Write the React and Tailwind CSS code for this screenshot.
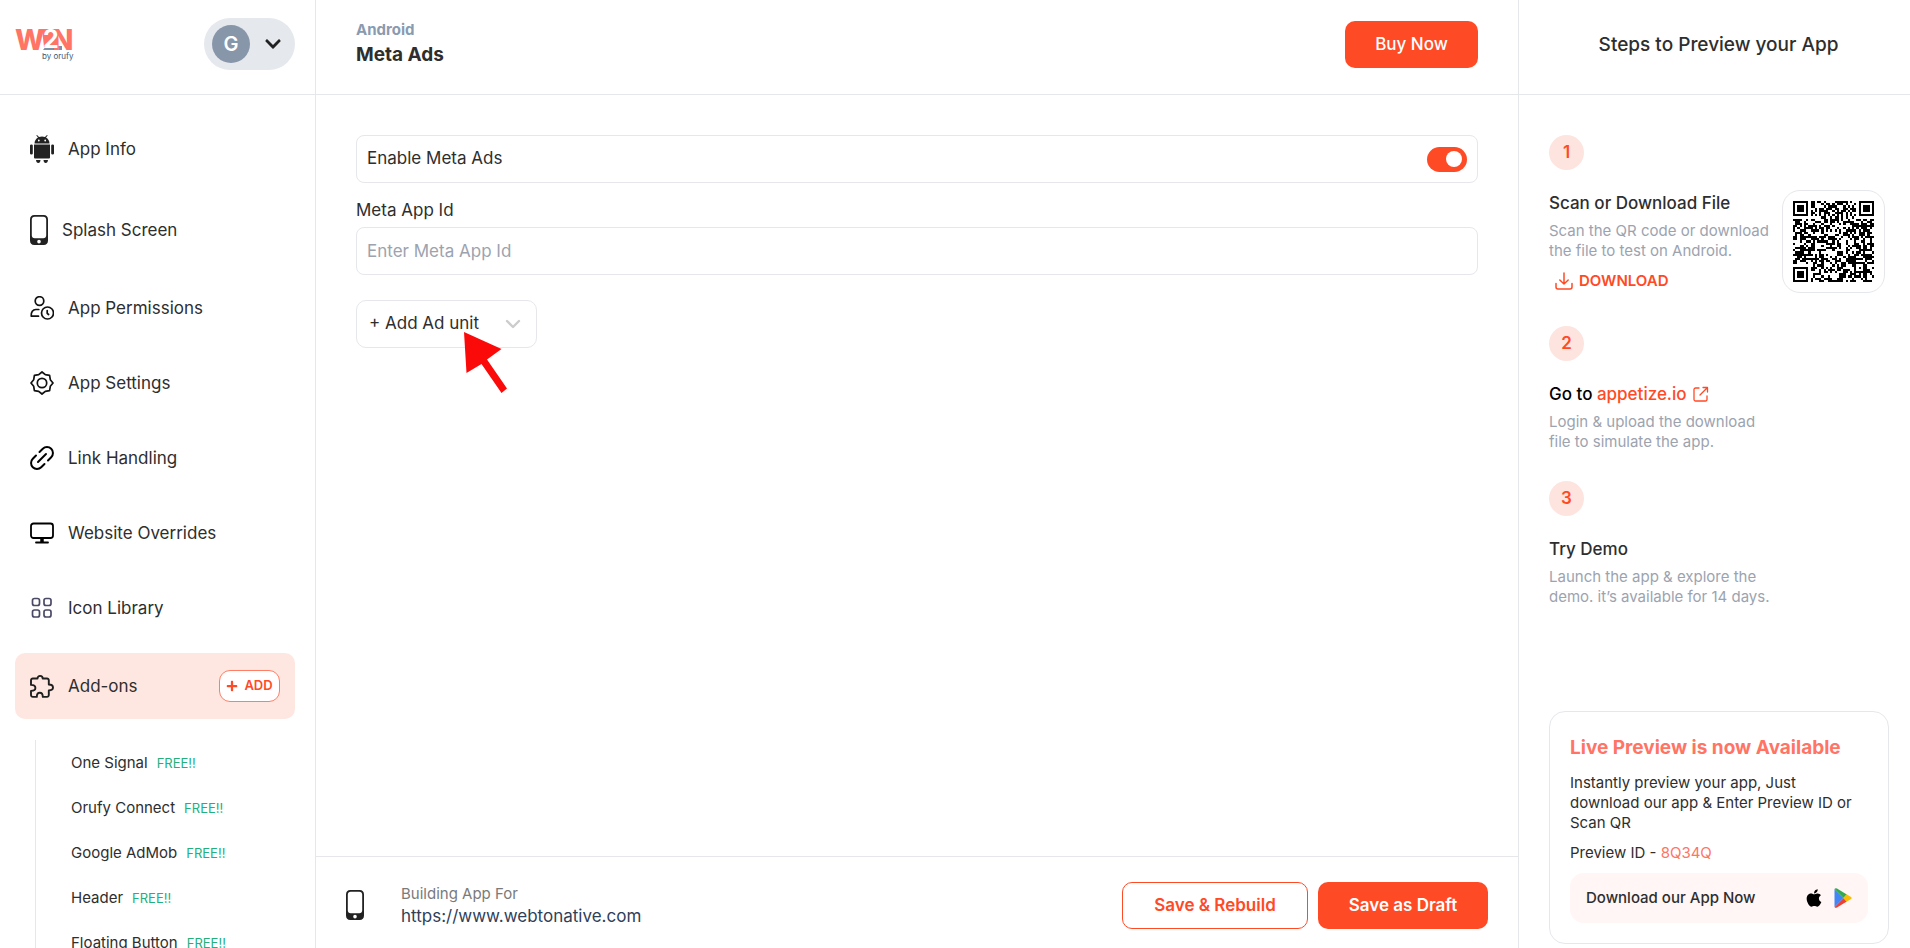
import React, { useState } from "react";
import { FaApple, FaChevronDown, FaPlus } from "react-icons/fa";

const QR_SIZE = 37;

function inFinder(x, y, left, top) {
  const dx = x - left;
  const dy = y - top;
  if (dx < -1 || dy < -1 || dx > 7 || dy > 7) return null;
  const ring = Math.max(Math.abs(dx - 3), Math.abs(dy - 3));
  return ring === 3 || ring < 2;
}

function qrPath() {
  let seed = 8734;
  let d = "";
  for (let y = 0; y < QR_SIZE; y++) {
    for (let x = 0; x < QR_SIZE; x++) {
      seed = (seed * 1103515245 + 12345) % 2147483648;
      let on = (seed >> 12) % 100 < 52;
      if (y === 6 || x === 6) on = (x + y) % 2 === 0;
      const align = Math.max(Math.abs(x - 30), Math.abs(y - 30));
      if (align < 3) on = align !== 1;
      const finder = inFinder(x, y, 0, 0) ?? inFinder(x, y, QR_SIZE - 7, 0) ?? inFinder(x, y, 0, QR_SIZE - 7);
      if (finder !== null) on = finder;
      if (on) d += `M${x} ${y}h1v1h-1z`;
    }
  }
  return d;
}

const qr = qrPath();

function QrCode() {
  return (
    <svg viewBox={`0 0 ${QR_SIZE} ${QR_SIZE}`} className="size-[81px]" role="img" aria-label="QR code">
      <path d={qr} fill="#000" shapeRendering="crispEdges" />
    </svg>
  );
}

function Logo() {
  return (
    <svg viewBox="0 0 60 44" className="h-11 w-[60px]" role="img" aria-label="W2N by orufy" fontFamily="Inter, sans-serif">
      <path d="M27 9h16v18H29z" fill="#ff7465" />
      <path d="M31 26h16v4H28z" fill="#7f93a8" />
      <text x="0" y="30" fontSize="28" fontWeight="800" fill="#ff7465">W</text>
      <text x="37" y="30" fontSize="28" fontWeight="800" fill="#ff7465">N</text>
      <text x="28" y="28" fontSize="25" fontWeight="700" fill="#fff">2</text>
      <text x="27" y="39" fontSize="8" fill="#3b5876">by orufy</text>
    </svg>
  );
}

function AndroidIcon() {
  return (
    <svg viewBox="0 0 24 28" className="h-[30px] w-6" fill="#222" aria-hidden="true">
      <path d="M4.500 8.500C4.500 5.600 6 3.500 8 2.400L6.300.4l.7-.4 2 2a8.500 8.500 0 0 1 6 0l2-2 .7.4L16 2.400c2 1.100 3.500 3.200 3.500 6.100zM8.800 4.600a.9.9 0 1 0 0 1.800.9.9 0 0 0 0-1.800zm6.400 0a.9.9 0 1 0 0 1.800.9.9 0 0 0 0-1.800z" />
      <path d="M4 9.500h16V22.500q0 1-1 1H5q-1 0-1-1zM0 10.500q0-1 1.400-1t1.400 1v8q0 1-1.400 1t-1.400-1zM21.200 10.500q0-1 1.400-1t1.400 1v8q0 1-1.400 1t-1.400-1zM6 25h4.500q-.2 3-2.200 3T6 25zM13.500 25H18q-.3 3-2.300 3t-2.200-3z" />
    </svg>
  );
}

function PhoneIcon() {
  return (
    <svg viewBox="0 0 19 30" className="h-[30px] w-[18px]" preserveAspectRatio="none" aria-hidden="true">
      <path fillRule="evenodd" fill="#222" d="M4.500 0h10C17.300 0 19 1.700 19 4.500v21c0 2.800-1.700 4.500-4.500 4.500h-10C1.700 30 0 28.300 0 25.500v-21C0 1.700 1.700 0 4.500 0zM5 1.800C3 1.800 1.900 2.800 1.900 4.800v15.400c0 2 1.100 3 3.100 3h9c2 0 3.100-1 3.100-3V4.800c0-2-1.100-3-3.100-3zM9.500 24.700a1.900 1.900 0 1 0 0 3.800 1.900 1.900 0 0 0 0-3.800z" />
    </svg>
  );
}

function StrokeIcon({ children, color = "#111" }) {
  return (
    <svg viewBox="0 0 24 24" className="size-6" fill="none" stroke={color} strokeWidth="1.700" strokeLinecap="round" strokeLinejoin="round" aria-hidden="true">
      {children}
    </svg>
  );
}

function PermissionIcon() {
  return (
    <StrokeIcon>
      <circle cx="9.500" cy="5" r="4.300" />
      <path d="M8.500 20.200H1.200c-.4-4 1.800-6.700 4.600-6.700h3" />
      <circle cx="17.500" cy="17" r="6" />
      <path d="M17.200 14.500v2.800l1.400 1.200" />
    </StrokeIcon>
  );
}

function GearIcon() {
  return (
    <StrokeIcon>
      <path d="M12 1l3.300 2.700 4.300.7.700 4.300L23 12l-2.700 3.300-.7 4.300-4.300.7L12 23l-3.300-2.700-4.300-.7-.7-4.300L1 12l2.700-3.300.7-4.300 4.300-.7z" />
      <circle cx="12" cy="12" r="4.700" />
    </StrokeIcon>
  );
}

function ChainIcon() {
  return (
    <svg viewBox="0 0 24 24" className="size-6" fill="none" stroke="#000" strokeWidth="2" strokeLinecap="round" aria-hidden="true">
      <path d="M8 16l8-8" />
      <path d="M9.500 6l3.300-3.200a5.900 5.900 0 0 1 8.400 8.400L18 14.500" />
      <path d="M6 9.500l-3.200 3.300a5.900 5.900 0 0 0 8.400 8.400L14.500 18" />
    </svg>
  );
}

function MonitorIcon() {
  return (
    <svg viewBox="0 0 24 24" className="size-6" fill="none" stroke="#000" strokeWidth="1.800" strokeLinecap="round" aria-hidden="true">
      <rect x="1" y="2.500" width="22" height="14.500" rx="2.500" />
      <path d="M6 21.500h12" />
      <path d="M12 18v3" strokeWidth="3.500" strokeLinecap="butt" />
    </svg>
  );
}

function GridIcon() {
  return (
    <StrokeIcon color="#4b4a66">
      <rect x="2.500" y="2.500" width="7" height="7" rx="2" />
      <rect x="14" y="2.500" width="7" height="7" rx="2" />
      <rect x="2.500" y="14" width="7" height="7" rx="2" />
      <rect x="14" y="14" width="7" height="7" rx="2" />
    </StrokeIcon>
  );
}

function PuzzleIcon() {
  return (
    <svg viewBox="0 0 24 24" className="size-6" fill="none" stroke="#1f1f1f" strokeWidth="1.900" strokeLinejoin="round" aria-hidden="true">
      <path d="M7.500 4.500a2.600 2.600 0 0 1 5.200 0h4.300a1.800 1.800 0 0 1 1.800 1.800v4.200q4.200.2 4.200 3t-4.200 3v4.600a1.800 1.800 0 0 1-1.800 1.800h-4.200q0-4.200-3-4.200t-3 4.200H2.800A1.800 1.800 0 0 1 1 21.100v-4.200q4.400-.2 4.400-3t-4.400-3V6.300a1.800 1.800 0 0 1 1.800-1.800z" />
    </svg>
  );
}

function DownloadIcon() {
  return (
    <svg viewBox="0 0 18 18" className="size-[18px]" fill="none" stroke="#ff4a26" strokeWidth="1.500" strokeLinecap="round" strokeLinejoin="round" aria-hidden="true">
      <path d="M9 1v11M4.800 8L9 12l4.200-4M1 11.500v3.500a2 2 0 0 0 2 2h12a2 2 0 0 0 2-2v-3.500" />
    </svg>
  );
}

function ExternalIcon() {
  return (
    <svg viewBox="0 0 16 16" className="size-4" fill="none" stroke="#ff4a26" strokeWidth="1.300" strokeLinecap="round" strokeLinejoin="round" aria-hidden="true">
      <path d="M6 2H2.500A1.500 1.500 0 0 0 1 3.500v10A1.500 1.500 0 0 0 2.500 15h10a1.500 1.500 0 0 0 1.500-1.500V10M10 1.500h4.500V6M14.500 1.500L7 9" />
    </svg>
  );
}

function PlayIcon() {
  return (
    <svg viewBox="0 0 18 20" className="h-5 w-[18px]" aria-hidden="true">
      <path d="M.5 1v18L9.500 10z" fill="#4285f4" />
      <path d="M.5 1Q1.500-.4 3 .5l9.800 5.900L9.500 10z" fill="#34a853" />
      <path d="M.5 19q1 1.400 2.500.5l9.800-5.900L9.500 10z" fill="#ea4335" />
      <path d="M12.600 6.300l4.400 2.600q1.400 1.100 0 2.200l-4.400 2.600L9.300 10z" fill="#fbbc04" />
    </svg>
  );
}

const navItems = [
  { label: "App Info", icon: AndroidIcon },
  { label: "Splash Screen", icon: PhoneIcon },
  { label: "App Permissions", icon: PermissionIcon },
  { label: "App Settings", icon: GearIcon },
  { label: "Link Handling", icon: ChainIcon },
  { label: "Website Overrides", icon: MonitorIcon },
  { label: "Icon Library", icon: GridIcon },
];

const addons = ["One Signal", "Orufy Connect", "Google AdMob", "Header", "Floating Button"];

function Sidebar() {
  return (
    <aside className="flex w-[316px] shrink-0 flex-col overflow-hidden border-r border-gray-200">
      <div className="flex h-[95px] shrink-0 items-start justify-between border-b border-gray-200 pt-[18px] pr-5 pl-[15px]">
        <a href="#home" className="mt-[2px]">
          <Logo />
        </a>
        <button type="button" className="flex h-[52px] w-[91px] items-center gap-[14px] rounded-full bg-[#e5e8ed] pl-2">
          <span className="flex size-[38px] items-center justify-center rounded-full bg-[#8896aa] text-xl font-semibold text-white">G</span>
          <FaChevronDown className="size-[18px] text-[#222]" aria-hidden="true" />
        </button>
      </div>
      <nav className="flex flex-col gap-[15px] pt-[21px] pr-5 pl-[15px]">
        {navItems.map(({ label, icon: Icon }) => (
          <a key={label} href="#nav" className="flex shrink-0 items-center gap-[14px] py-[18px] pl-[15px] text-[17px] leading-6">
            <Icon />
            {label}
          </a>
        ))}
        <div className="flex h-[66px] shrink-0 items-center justify-between rounded-[10px] bg-[#ffe7e1] pr-[15px] pl-[15px]">
          <a href="#addons" className="flex items-center gap-[14px] text-[17px] leading-6">
            <PuzzleIcon />
            Add-ons
          </a>
          <button type="button" className="flex h-8 w-[61px] items-center justify-center gap-[6px] rounded-[11px] border border-[#ff7e66] bg-white text-[13px] font-semibold text-[#ff4a26]">
            <FaPlus className="size-3" aria-hidden="true" />
            ADD
          </button>
        </div>
      </nav>
      <ul className="mt-[21px] ml-[35px] border-l border-gray-200 pl-[35px]">
        {addons.map((name) => (
          <li key={name} className="flex h-[45px] items-center">
            <a href="#addon" className="text-[15px] leading-5">{name}</a>
            <span className="ml-[9px] text-[13px] leading-5 text-[#22b07d]">FREE!!</span>
          </li>
        ))}
      </ul>
    </aside>
  );
}

function AdUnitSelect() {
  return (
    <div className="relative mt-[25px] w-[181px]">
      <select aria-label="Add Ad unit" className="h-12 w-full appearance-none rounded-[10px] border border-gray-200 bg-white pl-3 text-[17px]">
        <option>+ Add Ad unit</option>
      </select>
      <svg viewBox="0 0 16 10" className="pointer-events-none absolute top-[19px] right-4 h-[10px] w-4" fill="none" stroke="#ccc" strokeWidth="2.400" strokeLinecap="round" strokeLinejoin="round" aria-hidden="true">
        <path d="M2 2l6 6 6-6" />
      </svg>
      <svg viewBox="0 0 44 62" className="pointer-events-none absolute top-8 left-[107px] h-[62px] w-11" aria-hidden="true">
        <path d="M1 0l37.500 17L24 27.500 44 56.500 38.500 61 18.500 32 3.500 41z" fill="#fb0a0a" />
      </svg>
    </div>
  );
}

function Main() {
  const [enabled, setEnabled] = useState(true);
  const [appId, setAppId] = useState("");

  return (
    <main className="flex min-w-0 flex-1 flex-col">
      <header className="flex h-[95px] shrink-0 items-start justify-between border-b border-gray-200 pt-[19px] pr-10 pl-10">
        <div>
          <div className="text-[15px] leading-[22px] font-bold text-[#8a9ab0]">Android</div>
          <h1 className="text-[19px] leading-7 font-bold">Meta Ads</h1>
        </div>
        <button type="button" className="mt-[2px] h-[47px] w-[133px] rounded-[10px] bg-[#ff4a26] text-[17px] font-medium text-white">Buy Now</button>
      </header>
      <section className="flex-1 px-10 pt-10">
        <label className="flex h-12 cursor-pointer items-center justify-between rounded-lg border border-gray-200 pr-[10px] pl-[10px] text-[17px]">
          Enable Meta Ads
          <input type="checkbox" className="peer sr-only" checked={enabled} onChange={(event) => setEnabled(event.target.checked)} />
          <span className="flex h-[25px] w-10 items-center justify-start rounded-full bg-gray-300 px-[5px] peer-checked:justify-end peer-checked:bg-[#ff4a26]">
            <span className="size-4 rounded-full bg-white" />
          </span>
        </label>
        <label htmlFor="metaAppId" className="mt-[15px] block text-[17px] leading-6">Meta App Id</label>
        <input
          id="metaAppId"
          type="text"
          value={appId}
          onChange={(event) => setAppId(event.target.value)}
          placeholder="Enter Meta App Id"
          className="mt-[5px] block h-12 w-full rounded-lg border border-gray-200 px-[10px] text-[17px] placeholder:text-[#9ca3af]"
        />
        <AdUnitSelect />
      </section>
      <footer className="flex h-[92px] shrink-0 items-start justify-between border-t border-gray-200 pt-[25px] pr-[30px] pl-[30px]">
        <div className="flex items-center gap-[37px] pt-px">
          <PhoneIcon />
          <div>
            <div className="text-[15px] leading-[22px] text-[#7a7a7a]">Building App For</div>
            <div className="text-[17px] leading-[22px] text-[#2f4059]">https://www.webtonative.com</div>
          </div>
        </div>
        <div className="flex gap-[10px]">
          <button type="button" className="h-[47px] w-[186px] rounded-[10px] border border-[#ff4a26] text-[17px] font-semibold text-[#ff4a26]">Save & Rebuild</button>
          <button type="button" className="h-[47px] w-[170px] rounded-[10px] bg-[#ff4a26] text-[17px] font-semibold text-white">Save as Draft</button>
        </div>
      </footer>
    </main>
  );
}

function StepNumber({ children }) {
  return (
    <span className="flex size-[35px] items-center justify-center rounded-full bg-[#fde4df] text-[17px] font-semibold text-[#ff4a26]">{children}</span>
  );
}

function PreviewPanel() {
  return (
    <aside className="flex w-[392px] shrink-0 flex-col border-l border-gray-200">
      <div className="flex h-[95px] shrink-0 items-start justify-center border-b border-gray-200 pt-[31px] pl-2">
        <h2 className="text-[19px] leading-7 font-medium">Steps to Preview your App</h2>
      </div>
      <div className="flex flex-1 flex-col justify-between pt-10 pr-[21px] pb-1 pl-[30px]">
        <ol>
          <li>
            <StepNumber>1</StepNumber>
            <div className="mt-5 flex justify-between">
              <div>
                <h3 className="text-[17px] leading-[26px] font-medium">Scan or Download File</h3>
                <p className="mt-[5px] w-[224px] text-[15px] leading-5 text-[#9ca3af]">Scan the QR code or download the file to test on Android.</p>
                <a href="#download" className="mt-[9px] flex items-center gap-[6px] pl-[6px] text-[15px] leading-[22px] font-semibold text-[#ff4a26]">
                  <DownloadIcon />
                  DOWNLOAD
                </a>
              </div>
              <div className="mr-1 flex size-[103px] items-center justify-center rounded-[18px] border border-gray-200">
                <QrCode />
              </div>
            </div>
          </li>
          <li className="mt-[33px]">
            <StepNumber>2</StepNumber>
            <h3 className="mt-5 flex items-center text-[17px] leading-[26px] font-medium text-black">
              Go to&nbsp;
              <a href="#appetize" className="flex items-center gap-[6px] text-[#ff4a26]">
                appetize.io
                <ExternalIcon />
              </a>
            </h3>
            <p className="mt-[5px] w-[224px] text-[15px] leading-5 text-[#9ca3af]">Login & upload the download file to simulate the app.</p>
          </li>
          <li className="mt-[29px]">
            <StepNumber>3</StepNumber>
            <h3 className="mt-5 text-[17px] leading-[26px] font-medium">Try Demo</h3>
            <p className="mt-[5px] w-[224px] text-[15px] leading-5 text-[#9ca3af]">Launch the app & explore the demo. it’s available for 14 days.</p>
          </li>
        </ol>
        <section className="rounded-[16px] border border-gray-200 px-5 pt-[22px] pb-5">
          <h2 className="text-[19px] leading-7 font-bold text-[#ff7465]">Live Preview is now Available</h2>
          <p className="mt-[11px] text-[15px] leading-5">Instantly preview your app, Just download our app & Enter Preview ID or Scan QR</p>
          <p className="mt-[10px] text-[15px] leading-5">
            Preview ID - <span className="text-[#ff7465]">8Q34Q</span>
          </p>
          <a href="#app" className="mt-[10px] flex h-[50px] items-center rounded-[14px] bg-[#fff6f5] px-4 text-[15px] font-medium">
            <span className="flex-1">Download our App Now</span>
            <FaApple className="mr-[10px] size-5 text-black" aria-hidden="true" />
            <PlayIcon />
          </a>
        </section>
      </div>
    </aside>
  );
}

export default function App() {
  return (
    <div className="flex h-screen overflow-hidden bg-white font-[Inter,sans-serif] text-[#2e2e2e]">
      <Sidebar />
      <Main />
      <PreviewPanel />
    </div>
  );
}
